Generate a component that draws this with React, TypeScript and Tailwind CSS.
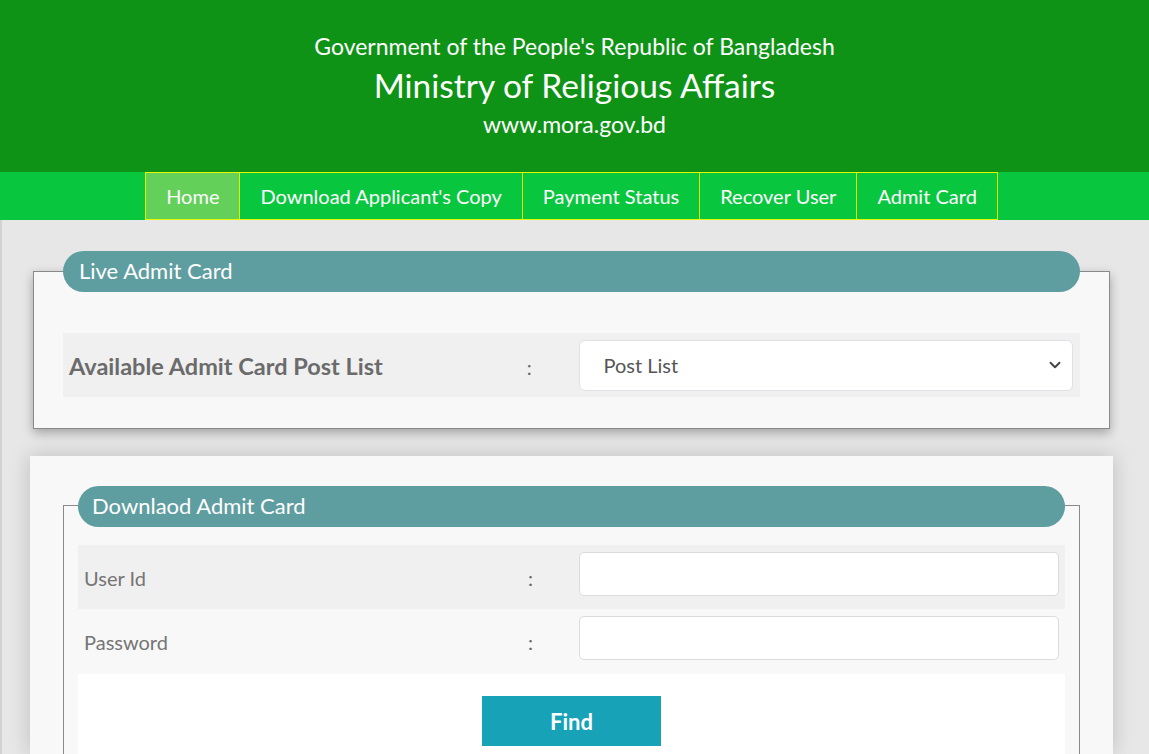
import { ChevronDown } from "lucide-react";

const navItems = [
  { label: "Home", active: true },
  { label: "Download Applicant's Copy", active: false },
  { label: "Payment Status", active: false },
  { label: "Recover User", active: false },
  { label: "Admit Card", active: false },
];

function FormRow({
  label,
  shaded,
  type,
}: {
  label: string;
  shaded: boolean;
  type: string;
}) {
  return (
    <div
      className={`grid h-16 grid-cols-12 items-start pt-[7px] ${
        shaded ? "bg-[#f0f0f0]" : "bg-[#f8f8f8]"
      }`}
    >
      <label className="col-span-5 pl-[6px] pt-[14px] text-[20px] leading-[24px] text-[#757575]">
        {label}
      </label>
      <span className="col-span-1 pt-[14px] text-center text-[20px] leading-[24px] text-[#666]">
        :
      </span>
      <div className="col-span-6 pl-[7px] pr-[6px]">
        <input
          type={type}
          className="h-[44px] w-full rounded-[5px] border border-[#dcdcdc] bg-white px-3 outline-none"
        />
      </div>
    </div>
  );
}

export default function App() {
  return (
    <div className="min-h-[754px] bg-[#e7e7e7] font-['Lato',sans-serif]">
      <header className="flex h-[172px] flex-col items-center bg-[#0e9316] pt-[31px] text-white">
        <p className="text-[23px] leading-[30px]">
          Government of the People's Republic of Bangladesh
        </p>
        <h1 className="mt-[2px] text-[33.5px] leading-[44px]">
          Ministry of Religious Affairs
        </h1>
        <p className="mt-[2px] text-[23px] leading-[30px]">www.mora.gov.bd</p>
      </header>

      <nav className="flex h-[48px] justify-center bg-[#08c63e] pr-[6px]">
        <ul className="flex">
          {navItems.map((item) => (
            <li
              key={item.label}
              className={`flex items-center border border-[#e4f800] px-[20px] text-[20px] text-white ${
                item.active ? "bg-[#63d05a]" : ""
              } ${item.label === "Home" ? "" : "-ml-px"}`}
            >
              {item.label}
            </li>
          ))}
        </ul>
      </nav>

      <main className="border-l-2 border-[#d2d2d2] pt-[31px]">
        <section className="mx-[31px] mt-[20px] w-[1077px] border border-[#8a8a8a] bg-[#f8f8f8] pb-[31px] shadow-[0_4px_10px_rgba(0,0,0,0.3)]">
          <div className="mx-[29px] -mt-[21px] flex h-[41px] items-center rounded-full bg-[#5f9ea0] pb-[2px] pl-[16px] text-[22px] text-white">
            Live Admit Card
          </div>
          <div className="mx-[29px] mt-[41px] grid h-16 grid-cols-12 items-center bg-[#f0f0f0]">
            <span className="col-span-5 pl-[6px] pt-[3px] text-[23.5px] font-bold text-[#6b6b6b]">
              Available Admit Card Post List
            </span>
            <span className="col-span-1 pt-[3px] text-center text-[20px] text-[#666]">
              :
            </span>
            <div className="col-span-6 pl-[7px] pr-[7px]">
              <div className="flex h-[51px] items-center justify-between rounded-[6px] border border-[#dee2e6] bg-white pl-[24px] pr-[8px]">
                <span className="text-[20px] text-[#555]">Post List</span>
                <ChevronDown className="h-[18px] w-[18px] text-[#444]" strokeWidth={2.5} />
              </div>
            </div>
          </div>
        </section>

        <section className="mx-[28px] mt-[27px] w-[1083px] bg-[#f8f8f8] px-[33px] pt-[49px] shadow-[0_0_20px_rgba(0,0,0,0.18)]">
          <div className="border-x border-t border-[#8a8a8a] px-[14px]">
            <div className="-mt-[20px] flex h-[41px] items-center rounded-full bg-[#5f9ea0] pb-[2px] pl-[14px] text-[22px] text-white">
              Downlaod Admit Card
            </div>
            <div className="mt-[18px]">
              <FormRow label="User Id" shaded type="text" />
              <FormRow label="Password" shaded={false} type="password" />
            </div>
            <div className="mt-px flex h-[80px] justify-center bg-white pt-[22px]">
              <button
                type="button"
                className="h-[50px] w-[179px] bg-[#17a2b8] text-[22px] font-bold text-white"
              >
                Find
              </button>
            </div>
          </div>
        </section>
      </main>
    </div>
  );
}
